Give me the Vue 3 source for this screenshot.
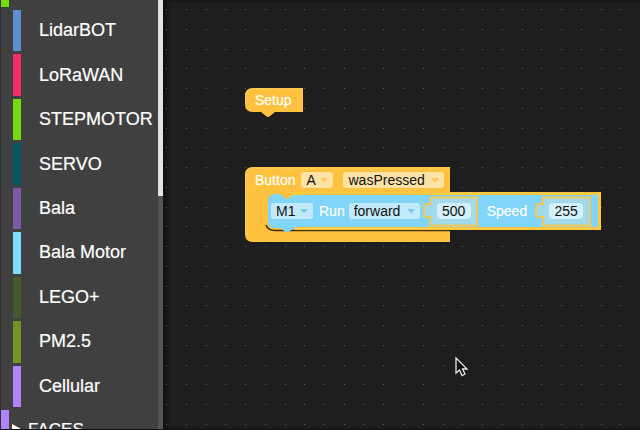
<script setup>
import { ref } from 'vue'

const categories = [
  { name: 'LidarBOT', color: '#5b8fcf' },
  { name: 'LoRaWAN', color: '#f22d68' },
  { name: 'STEPMOTOR', color: '#74dc0c' },
  { name: 'SERVO', color: '#075669' },
  { name: 'Bala', color: '#7b5ba6' },
  { name: 'Bala Motor', color: '#80dcff' },
  { name: 'LEGO+', color: '#435a2f' },
  { name: 'PM2.5', color: '#6f9423' },
  { name: 'Cellular', color: '#b184ff' },
]

// Grid dots of the workspace, relative to its left edge.
const pitch = 19.75
const dots = []
for (let row = 0; row < 60; row++) {
  for (let col = 0; col < 100; col++) {
    dots.push({ x: Math.round(3 + col * pitch), y: Math.round(9 + row * pitch) })
  }
}

const button = ref('A')
const event = ref('wasPressed')
const motor = ref('M1')
const direction = ref('forward')
const pulse = ref('500')
const speed = ref('255')
</script>

<template>
  <div class="app">
    <nav class="toolbox" aria-label="Block categories">
      <div class="tree">
        <span class="stub"></span>
        <ul class="list">
          <li v-for="c in categories" :key="c.name">
            <button type="button" class="category">
              <span class="swatch" :style="{ background: c.color }"></span>{{ c.name }}
            </button>
          </li>
        </ul>
        <div class="parent">
          <button type="button" class="group">
            <span class="swatch violet"></span>
            <svg class="caret" width="12" height="12" viewBox="0 0 12 12"><path d="M0 0 11 6 0 12z" fill="#fff" /></svg>
            FACES
          </button>
        </div>
      </div>
      <div class="track"><div class="thumb"></div></div>
    </nav>

    <main class="workspace">
      <svg class="dots" width="100%" height="100%">
        <rect v-for="(d, i) in dots" :key="i" :x="d.x" :y="d.y" width="1" height="1" fill="#5c5c5c" />
      </svg>

      <div class="block setup">
        <svg class="shape" width="60" height="32" viewBox="0 0 60 32">
          <path d="M8 0H58V24H30L25 28Q23 30 21 28L16 24H8Q0 24 0 16V8Q0 0 8 0Z" fill="#ffc23e" />
          <path d="M1 16V8Q1 1 8 1H57" fill="none" stroke="#ffcf63" />
        </svg>
        <span class="label">Setup</span>
      </div>

      <div class="block handler">
        <svg class="shape" width="208" height="78" viewBox="0 0 208 78">
          <path d="M8 0H205V75H8Q0 75 0 67V8Q0 0 8 0Z" fill="#ffc23e" />
          <path d="M1 67V8Q1 1 8 1H204" fill="none" stroke="#ffcf63" />
          <path d="M21 58Q23 63.500 30 63.500H205" fill="none" stroke="#382c16" stroke-width="1.5" />
        </svg>
        <div class="head">
          <span class="label">Button</span>
          <span class="field warm letter">
            <select v-model="button" aria-label="Button name"><option>A</option><option>B</option><option>C</option></select>
            <svg class="arrow" width="8" height="5" viewBox="0 0 8 5"><path d="M0 0H8L4 4.5z" fill="#ffc65a" /></svg>
          </span>
          <span class="field warm event">
            <select v-model="event" aria-label="Button event"><option>wasPressed</option><option>wasReleased</option></select>
            <svg class="arrow" width="8" height="5" viewBox="0 0 8 5"><path d="M0 0H8L4 4.5z" fill="#ffc65a" /></svg>
          </span>
        </div>

        <div class="statement">
          <svg class="shape" width="336" height="44" viewBox="0 0 336 44">
            <path d="M8 2H13L18 6Q20 7.5 22 6L27 2H332.5V36.5H27L22 39.5Q20 41 18 39.5L13 36H7Q1 36 1 29V9Q1 2 8 2Z" fill="#80d5f8" />
            <path d="M22 1.500H332.500V36.500H28" fill="none" stroke="#ffc83f" stroke-width="3" />
            <path d="M163.500 5.500H210V33.500H163.500V25H159Q157 25 157 22V15Q157 12 160 12H163.500Z" fill="#a2daec" stroke="#f2c858" stroke-width="2" />
            <path d="M276 5.500H323V33.500H276V25H271Q269 25 269 22V15Q269 12 272 12H276Z" fill="#a2daec" stroke="#f2c858" stroke-width="2" />
          </svg>
          <span class="field cool motor">
            <select v-model="motor" aria-label="Motor"><option>M1</option><option>M2</option></select>
            <svg class="arrow" width="8" height="5" viewBox="0 0 8 5"><path d="M0 0H8L4 4.5z" fill="#77cdf0" /></svg>
          </span>
          <span class="label">Run</span>
          <span class="field cool direction">
            <select v-model="direction" aria-label="Direction"><option>forward</option><option>backward</option></select>
            <svg class="arrow" width="8" height="5" viewBox="0 0 8 5"><path d="M0 0H8L4 4.5z" fill="#77cdf0" /></svg>
          </span>
          <input v-model="pulse" class="number" type="text" aria-label="Run value" />
          <label class="label" for="speed">Speed</label>
          <input id="speed" v-model="speed" class="number" type="text" />
        </div>
      </div>

      <svg class="pointer" width="14" height="20" viewBox="0 0 14 20">
        <path d="M1 1V16L4.500 13L7 18.500L10 17L7.500 12H12Z" fill="#111" stroke="#e8e8e8" stroke-width="1.3" />
      </svg>
    </main>
  </div>
</template>

<style>
body {
  margin: 0;
  background: #1e1e1e;
}
</style>

<style scoped>
.app {
  display: flex;
  height: 100vh;
  overflow: hidden;
  box-sizing: border-box;
  border-bottom: 1px solid #111;
  font-family: "Liberation Sans", Arial, sans-serif;
  color: #fff;
}
button,
select,
input {
  font: inherit;
  border: 0;
  margin: 0;
  padding: 0;
}
.toolbox {
  display: flex;
  flex: none;
  background: #404040;
  border-left: 1px solid #303030;
}
.tree {
  display: flex;
  flex-direction: column;
  width: 157px;
  font-size: 18px;
}
.stub {
  width: 8px;
  height: 7px;
  flex: none;
  margin-bottom: 3px;
  background: #74dc0c;
}
.list {
  flex: 1;
  display: flex;
  flex-direction: column;
  list-style: none;
  margin: 0;
  padding: 0 0 0 12px;
}
.list li {
  flex: 1;
  display: flex;
  padding-bottom: 3px;
}
.category,
.group {
  display: flex;
  align-items: center;
  background: none;
  color: #fff;
  white-space: nowrap;
  -webkit-text-stroke: 0.2px #fff;
}
.category {
  gap: 18px;
}
.swatch {
  width: 8px;
  align-self: stretch;
}
.violet {
  background: #b184ff;
}
.parent {
  height: 19px;
  overflow: hidden;
}
.group {
  height: 39px;
  font-size: 17px;
}
.caret {
  margin: 0 4px 0 3px;
}
.track {
  width: 5px;
  background: #545454;
}
.thumb {
  height: 196px;
  background: #e2e2e2;
}
.workspace {
  position: relative;
  flex: 1;
  overflow: hidden;
  background: #1e1e1e;
  box-shadow: inset 4px 0 3px #121212;
}
.dots {
  position: absolute;
  inset: 0;
}
.block {
  position: absolute;
  font-size: 14px;
}
.setup {
  left: 82px;
  top: 88px;
  display: flex;
  align-items: center;
  height: 24px;
  padding: 0 10px;
}
.handler {
  left: 82px;
  top: 167px;
}
.shape {
  position: absolute;
  left: 0;
  top: 0;
}
.label {
  position: relative;
  -webkit-text-stroke: 0.2px #fff;
}
.head {
  display: flex;
  align-items: center;
  height: 25px;
  padding-left: 10px;
}
.field {
  position: relative;
  display: flex;
  align-items: center;
  height: 16px;
  border-radius: 3px;
}
.field select {
  appearance: none;
  width: 100%;
  height: 16px;
  padding-left: 5px;
  background: none;
  color: #111;
}
.arrow {
  position: absolute;
  right: 5px;
  top: 6px;
  pointer-events: none;
}
.warm {
  background: #ffe2a5;
}
.cool {
  background: #c3eafa;
}
.letter {
  width: 32px;
  margin: 0 10px 0 6px;
}
.event {
  width: 101px;
}
.statement {
  position: relative;
  display: flex;
  align-items: center;
  width: 334px;
  height: 38px;
  margin-left: 22px;
}
.motor {
  width: 42px;
  margin: 0 6px 0 4px;
}
.direction {
  width: 71px;
  margin: 0 17px 0 4px;
}
.number {
  position: relative;
  box-sizing: border-box;
  width: 34px;
  height: 16px;
  margin-right: 16px;
  border-radius: 4px;
  background: #d4f0fa;
  color: #111;
  text-align: center;
}
.statement label {
  margin-right: 22px;
}
.pointer {
  position: absolute;
  left: 292px;
  top: 357px;
}
</style>
